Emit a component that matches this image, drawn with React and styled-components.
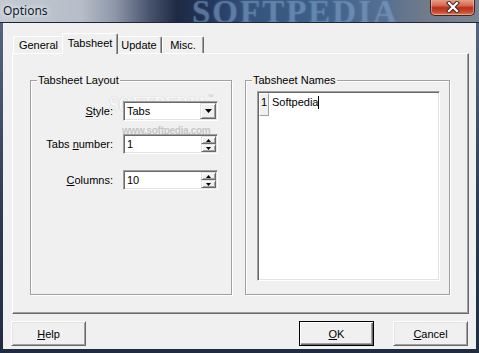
import React from 'react';
import styled, { createGlobalStyle } from 'styled-components';

const Global = createGlobalStyle`
  html, body { margin: 0; padding: 0; background: #2a3850; }
  body { font-family: "Liberation Sans", Arial, sans-serif; font-size: 11px; color: #000; }
  * { box-sizing: border-box; }
`;

const Window = styled.div`
  width: 479px;
  height: 353px;
  display: flex;
  flex-direction: column;
  background: linear-gradient(180deg, #5a6a82 0%, #2c3b52 60%, #1f2c40 100%);
  overflow: hidden;
`;

const TitleBar = styled.div`
  position: relative;
  flex: none;
  height: 23px;
  padding: 3px 0 0 3px;
  background: linear-gradient(90deg, #c4cad3 0%, #b6bdc8 17%, #8d97a8 24%, #4a5670 31%, #1e2a44 37%, #22345a 43%, #35537c 52%, #3f618b 68%, #566f91 80%, #6f7a8b 88%, #7b8491 100%);
  border-bottom: 1px solid #1c2638;
  overflow: hidden;
`;

const Title = styled.span`
  position: relative;
  z-index: 1;
  font-family: "Noto Sans", "Open Sans", sans-serif;
  font-size: 12px;
  line-height: 16px;
  color: #0e1b30;
  text-shadow: 0 0 5px rgba(255, 255, 255, 0.9), 0 0 8px rgba(255, 255, 255, 0.6);
`;

const TitleMark = styled.span`
  position: absolute;
  left: 192px;
  top: -6px;
  font-family: "Liberation Serif", serif;
  font-weight: bold;
  font-size: 33px;
  letter-spacing: 2px;
  color: rgba(125, 160, 200, 0.4);
  text-shadow: 0 0 2px rgba(125, 160, 200, 0.4);
  pointer-events: none;
  white-space: nowrap;
`;

const CloseButton = styled.div`
  position: absolute;
  right: 4px;
  top: -1px;
  width: 45px;
  height: 17px;
  border: 1px solid #3b2626;
  border-top: none;
  border-radius: 0 0 5px 5px;
  background: linear-gradient(180deg, #e9a793 0%, #d66a50 40%, #b9301b 55%, #c94a2e 80%, #dc7a52 100%);
  box-shadow: inset 0 0 0 1px rgba(255, 220, 200, 0.45);
  display: flex;
  align-items: center;
  justify-content: center;
`;

const Client = styled.div`
  flex: 1;
  margin: 0 3px 4px 3px;
  background: #f0f0f0;
  display: flex;
  flex-direction: column;
  padding: 10px 8px 3px 8px;
`;

const TabStrip = styled.div`
  position: relative;
  z-index: 1;
  display: flex;
  align-items: flex-end;
  height: 20px;
  margin-left: 2px;
`;

const Tab = styled.div`
  position: relative;
  width: ${(p) => p.$w}px;
  height: ${(p) => (p.$active ? 21 : 17)}px;
  margin: ${(p) => (p.$active ? '0 -2px -1px -2px' : '0')};
  z-index: ${(p) => (p.$active ? 2 : 1)};
  background: #f0f0f0;
  border-top: 1px solid #fff;
  border-left: 1px solid #fff;
  border-right: 1px solid #696969;
  box-shadow: inset -1px 0 0 #a0a0a0;
  border-radius: 2px 2px 0 0;
  display: flex;
  align-items: center;
  justify-content: center;
  padding-bottom: ${(p) => (p.$active ? 2 : 0)}px;
  white-space: nowrap;
`;

const Panel = styled.div`
  position: relative;
  height: 261px;
  margin: 0 -1px 0 1px;
  border-top: 1px solid #fff;
  border-left: 1px solid #fff;
  border-right: 1px solid #696969;
  border-bottom: 1px solid #696969;
  box-shadow: inset -1px -1px 0 #a0a0a0;
  display: flex;
  gap: 13px;
  padding: 26px 18px 18px 17px;
`;

const Group = styled.div`
  position: relative;
  width: ${(p) => p.$w}px;
  border: 1px solid #a0a0a0;
  box-shadow: inset 1px 1px 0 #fff, 1px 1px 0 #fff;
  display: flex;
  flex-direction: column;
  padding: ${(p) => p.$pad};
`;

const Caption = styled.span`
  position: absolute;
  top: -7px;
  left: 6px;
  padding: 0 1px;
  line-height: 13px;
  background: #f0f0f0;
`;

const FieldRow = styled.div`
  display: grid;
  grid-template-columns: 82px 95px;
  column-gap: 10px;
  align-items: center;
  margin-top: ${(p) => p.$mt}px;
`;

const Label = styled.label`
  justify-self: end;
  white-space: nowrap;
  u { text-decoration: underline; text-underline-offset: 1px; }
`;

const Field = styled.div`
  height: 20px;
  width: 95px;
  background: #fff;
  border: 1px solid;
  border-color: #a0a0a0 #fff #fff #a0a0a0;
  box-shadow: inset 1px 1px 0 #696969, inset -1px -1px 0 #e3e3e3;
  display: flex;
  align-items: stretch;
  padding: 1px;
`;

const FieldText = styled.span`
  flex: 1;
  padding-left: 2px;
  line-height: 16px;
`;

const DropButton = styled.div`
  width: 16px;
  background: #f0f0f0;
  border: 1px solid;
  border-color: #e3e3e3 #696969 #696969 #e3e3e3;
  box-shadow: inset 1px 1px 0 #fff, inset -1px -1px 0 #a0a0a0;
  display: flex;
  align-items: center;
  justify-content: center;
`;

const SpinColumn = styled.div`
  width: 15px;
  display: flex;
  flex-direction: column;
`;

const SpinButton = styled.div`
  flex: 1;
  background: #f0f0f0;
  border: 1px solid;
  border-color: #e3e3e3 #696969 #696969 #e3e3e3;
  box-shadow: inset 1px 1px 0 #fff, inset -1px -1px 0 #a0a0a0;
  display: flex;
  align-items: center;
  justify-content: center;
`;

const Memo = styled.div`
  flex: 1;
  background: #fff;
  border: 1px solid;
  border-color: #a0a0a0 #fff #fff #a0a0a0;
  box-shadow: inset 1px 1px 0 #696969, inset -1px -1px 0 #e3e3e3;
  padding: 1px;
  display: flex;
  align-items: flex-start;
`;

const GutterCell = styled.div`
  width: 10px;
  height: 23px;
  background: #f0f0f0;
  border: 1px solid;
  border-color: #fff #a0a0a0 #a0a0a0 #fff;
  text-align: center;
  line-height: 15px;
  padding-top: 1px;
`;

const MemoLine = styled.div`
  display: flex;
  align-items: flex-start;
  padding: 2px 0 0 3px;
  line-height: 14px;
`;

const Caret = styled.span`
  display: inline-block;
  width: 1px;
  height: 13px;
  margin-top: 1px;
  background: #000;
`;

const Footer = styled.div`
  display: flex;
  margin-top: 7px;
  height: 25px;
  gap: 19px;
`;

const Spacer = styled.div`
  flex: 1;
`;

const Button = styled.button`
  width: 75px;
  height: 25px;
  margin: 0;
  padding: 0;
  font: inherit;
  color: #000;
  background: #f0f0f0;
  border: 1px solid;
  border-color: ${(p) => (p.$default ? '#000' : '#fff #696969 #696969 #fff')};
  box-shadow: ${(p) =>
    p.$default
      ? 'inset 1px 1px 0 #fff, inset -1px -1px 0 #696969, inset -2px -2px 0 #a0a0a0'
      : 'inset 1px 1px 0 #e3e3e3, inset -1px -1px 0 #a0a0a0'};
  u { text-decoration: underline; text-underline-offset: 1px; }
`;

const Watermark = styled.div`
  position: absolute;
  left: 96px;
  top: 38px;
  width: 120px;
  pointer-events: none;
  display: flex;
  flex-direction: column;
  align-items: flex-start;
`;

const MarkBig = styled.span`
  display: block;
  height: 24px;
  white-space: nowrap;
  font-family: "Liberation Serif", serif;
  font-weight: bold;
  font-size: 24px;
  line-height: 24px;
  transform: scaleX(0.72);
  transform-origin: left top;
  color: rgba(255, 255, 255, 0.9);
  text-shadow: 0 0 1px rgba(110, 110, 110, 0.45);
  sup {
    font-size: 8px;
    line-height: 0;
    vertical-align: 12px;
    font-family: "Liberation Sans", sans-serif;
    color: rgba(170, 170, 170, 0.6);
    text-shadow: none;
  }
`;

const MarkSmall = styled.span`
  display: block;
  white-space: nowrap;
  font-family: "Liberation Sans Narrow", "Liberation Sans", sans-serif;
  font-weight: bold;
  font-size: 10px;
  line-height: 11px;
  color: rgba(190, 190, 190, 0.85);
  margin: 9px 0 0 13px;
  letter-spacing: -0.3px;
`;

const DownArrow = () => (
  <svg width="7" height="4" viewBox="0 0 7 4">
    <path d="M0 0h7L3.5 4z" fill="#000" />
  </svg>
);

const UpSmall = () => (
  <svg width="5" height="3" viewBox="0 0 5 3">
    <path d="M2.5 0L5 3H0z" fill="#000" />
  </svg>
);

const DownSmall = () => (
  <svg width="5" height="3" viewBox="0 0 5 3">
    <path d="M0 0h5L2.5 3z" fill="#000" />
  </svg>
);

const CloseGlyph = () => (
  <svg width="14" height="12" viewBox="0 0 14 12">
    <path d="M3 2l8 8M11 2l-8 8" stroke="#3a2a2a" strokeWidth="4.2" strokeLinecap="square" />
    <path d="M3 2l8 8M11 2l-8 8" stroke="#fff" strokeWidth="2.2" strokeLinecap="square" />
  </svg>
);

const SpinField = ({ value }) => (
  <Field>
    <FieldText>{value}</FieldText>
    <SpinColumn>
      <SpinButton><UpSmall /></SpinButton>
      <SpinButton><DownSmall /></SpinButton>
    </SpinColumn>
  </Field>
);

const tabs = [
  { label: 'General', w: 51 },
  { label: 'Tabsheet', w: 56, active: true },
  { label: 'Update', w: 46 },
  { label: 'Misc.', w: 42 },
];

export default function App() {
  return (
    <>
      <Global />
      <Window>
        <TitleBar>
          <TitleMark>SOFTPEDIA</TitleMark>
          <Title>Options</Title>
          <CloseButton><CloseGlyph /></CloseButton>
        </TitleBar>
        <Client>
          <TabStrip>
            {tabs.map((t) => (
              <Tab key={t.label} $w={t.w} $active={t.active}>{t.label}</Tab>
            ))}
          </TabStrip>
          <Panel>
            <Watermark>
              <MarkBig>SOFTPEDIA<sup>™</sup></MarkBig>
              <MarkSmall>www.softpedia.com</MarkSmall>
            </Watermark>
            <Group $w={202} $pad="20px 0 0 0">
              <Caption>Tabsheet Layout</Caption>
              <FieldRow $mt={0}>
                <Label><u>S</u>tyle:</Label>
                <Field>
                  <FieldText>Tabs</FieldText>
                  <DropButton><DownArrow /></DropButton>
                </Field>
              </FieldRow>
              <FieldRow $mt={13}>
                <Label>Tabs <u>n</u>umber:</Label>
                <SpinField value="1" />
              </FieldRow>
              <FieldRow $mt={16}>
                <Label><u>C</u>olumns:</Label>
                <SpinField value="10" />
              </FieldRow>
            </Group>
            <Group $w={205} $pad="10px 9px 13px 11px">
              <Caption>Tabsheet Names</Caption>
              <Memo>
                <GutterCell>1</GutterCell>
                <MemoLine>Softpedia<Caret /></MemoLine>
              </Memo>
            </Group>
          </Panel>
          <Footer>
            <Button><u>H</u>elp</Button>
            <Spacer />
            <Button $default><u>O</u>K</Button>
            <Button><u>C</u>ancel</Button>
          </Footer>
        </Client>
      </Window>
    </>
  );
}
